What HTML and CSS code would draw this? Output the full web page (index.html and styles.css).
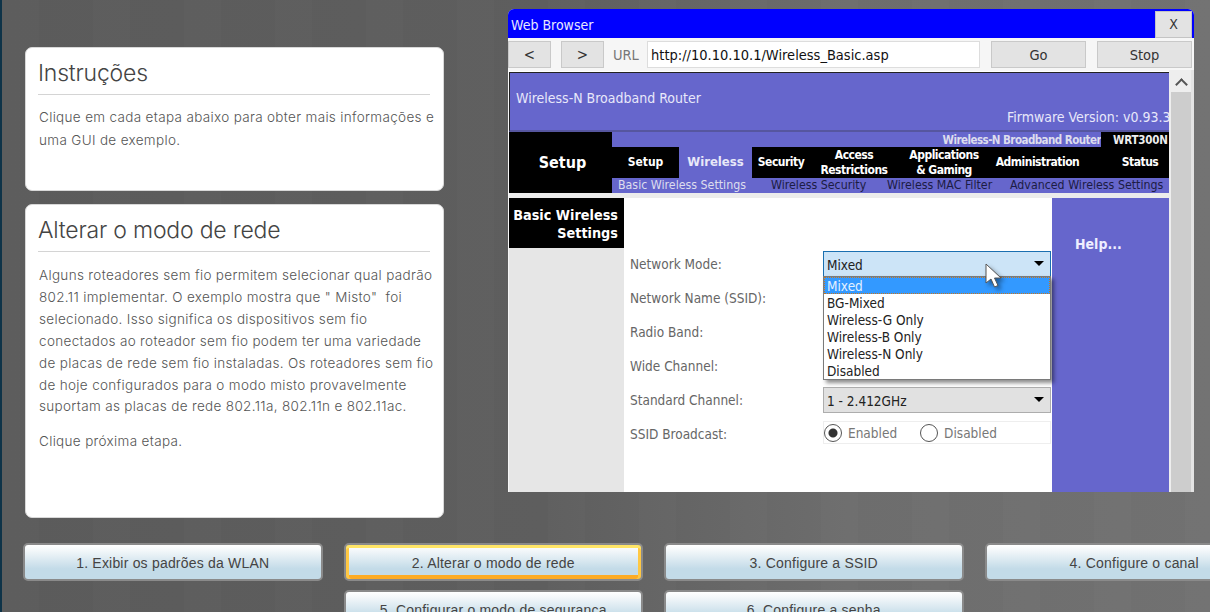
FILE: index.html
```html
<!DOCTYPE html>
<html lang="pt">
<head>
    <meta charset="UTF-8">
    <meta name="viewport" content="width=device-width, initial-scale=1.0">
    <title>Alterar o modo de rede</title>
    <link rel="stylesheet" href="styles.css">
</head>
<body>

<div class="page">
    <div class="top">
        <!-- Text column -->
        <div class="textCol">
            <div class="card cardSmall">
                <h2>Instruções</h2>
                <p>Clique em cada etapa abaixo para obter mais informações e uma GUI de exemplo.</p>
            </div>
            <div class="card cardBig">
                <h2>Alterar o modo de rede</h2>
                <p>Alguns roteadores sem fio permitem selecionar qual padrão 802.11 implementar. O exemplo mostra que " Misto"&nbsp; foi selecionado. Isso significa os dispositivos sem fio conectados ao roteador sem fio podem ter uma variedade de placas de rede sem fio instaladas. Os roteadores sem fio de hoje configurados para o modo misto provavelmente suportam as placas de rede 802.11a, 802.11n e 802.11ac.</p>
                <p class="next">Clique próxima etapa.</p>
            </div>
        </div>

        <!-- Browser window -->
        <div class="browser">
            <div class="titleBar">
                <span>Web Browser</span>
                <div class="closeBtn">X</div>
            </div>
            <div class="urlBar">
                <div class="btn navBtn">&lt;</div>
                <div class="btn navBtn">&gt;</div>
                <span class="urlLabel">URL</span>
                <div class="urlInput">http://10.10.10.1/Wireless_Basic.asp</div>
                <div class="btn goBtn">Go</div>
                <div class="btn goBtn">Stop</div>
            </div>
            <div class="viewport">
                <div class="site">
                    <div class="siteHeader">
                        <div class="siteName">Wireless-N Broadband Router</div>
                        <div class="firmware">Firmware Version: v0.93.3</div>
                    </div>
                    <div class="siteNav">
                        <div class="navTitle">Setup</div>
                        <div class="navRight">
                            <div class="navStrip">
                                <span>Wireless-N Broadband Router</span>
                                <b>WRT300N</b>
                            </div>
                            <div class="navTabs">
                                <div>Setup</div>
                                <div class="activeTab">Wireless</div>
                                <div>Security</div>
                                <div>Access<br>Restrictions</div>
                                <div>Applications<br>&amp; Gaming</div>
                                <div>Administration</div>
                                <div class="statusTab">Status</div>
                            </div>
                            <div class="subTabs">
                                <span class="subActive">Basic Wireless Settings</span>
                                <span class="sub2">Wireless Security</span>
                                <span class="sub3">Wireless MAC Filter</span>
                                <span class="sub4">Advanced Wireless Settings</span>
                            </div>
                        </div>
                    </div>
                    <div class="siteBody">
                        <div class="sideCol">
                            <div class="sideLabel">Basic Wireless<br>Settings</div>
                        </div>
                        <div class="formCol">
                            <div class="formRow">
                                <label>Network Mode:</label>
                                <div class="select selectOpen">Mixed<i class="caret"></i></div>
                            </div>
                            <div class="formRow"><label>Network Name (SSID):</label></div>
                            <div class="formRow"><label>Radio Band:</label></div>
                            <div class="formRow"><label>Wide Channel:</label></div>
                            <div class="formRow">
                                <label>Standard Channel:</label>
                                <div class="select">1 - 2.412GHz<i class="caret"></i></div>
                            </div>
                            <div class="formRow">
                                <label>SSID Broadcast:</label>
                                <div class="radios">
                                    <i class="radio radioOn"></i><span class="radioText">Enabled</span>
                                    <i class="radio"></i><span>Disabled</span>
                                </div>
                            </div>
                            <ul class="dropList">
                                <li class="picked">Mixed</li>
                                <li>BG-Mixed</li>
                                <li>Wireless-G Only</li>
                                <li>Wireless-B Only</li>
                                <li>Wireless-N Only</li>
                                <li>Disabled</li>
                            </ul>
                            <svg class="cursor" width="22" height="28" viewBox="0 0 22 28">
                                <path d="M2 1 L2 20 L7 16 L10.5 24 L14 22.5 L10.5 15 L17 15 Z" fill="#fff" stroke="#555" stroke-width="1"/>
                            </svg>
                        </div>
                        <div class="helpCol">Help...</div>
                    </div>
                </div>
                <div class="scrollBar"><div class="scrollUp"></div></div>
            </div>
        </div>
    </div>

    <!-- Step buttons -->
    <div class="steps">
        <div class="step">1. Exibir os padrões da WLAN</div>
        <div class="step stepActive">2. Alterar o modo de rede</div>
        <div class="step">3. Configure a SSID</div>
        <div class="step">4. Configure o canal</div>
        <div class="step stepSecondRow">5. Configurar o modo de segurança</div>
        <div class="step">6. Configure a senha</div>
    </div>
</div>

</body>
</html>
```

FILE: styles.css
```css
* {
    box-sizing: border-box;
}
html, body {
    margin: 0;
    height: 100%;
    overflow: hidden;
}
.page {
    width: 1210px;
    height: 612px;
    overflow: hidden;
    border-left: 2px solid #0e3348;
    background:
        repeating-linear-gradient(90deg, rgba(255,255,255,0.008) 0, rgba(255,255,255,0.008) 37px, rgba(0,0,0,0.01) 37px, rgba(0,0,0,0.01) 91px),
        linear-gradient(90deg, #5c5c5c 0%, #5f5f5f 45%, #6e6e6e 70%, #727272 100%);
}
.top {
    display: flex;
    align-items: flex-start;
    height: 530px;
}

/* text cards */
.textCol {
    width: 419px;
    margin: 47px 0 0 23px;
}
.card {
    background: #fff;
    border-radius: 7px;
    border: 1px solid #d8d8d8;
    padding: 0 13px 0 12px;
    color: #555;
    font-family: "Inter", sans-serif;
    font-size: 13.5px;
    font-weight: 300;
}
.cardSmall {
    height: 144px;
}
.cardBig {
    height: 314px;
    margin-top: 13px;
}
.card h2 {
    margin: 0;
    height: 47px;
    padding-top: 8px;
    border-bottom: 1px solid #d4d4d4;
    font-size: 23px;
    font-weight: 300;
    line-height: 34px;
    letter-spacing: -0.2px;
    color: #444;
}
.card p {
    margin: 11px -6px 0 1px;
    line-height: 23px;
    letter-spacing: 0.33px;
}
.cardBig p {
    margin-top: 13px;
    line-height: 21.9px;
}
.card .next {
    margin-top: 13px;
}

/* browser window */
.browser {
    width: 686px;
    height: 483px;
    margin: 9px 0 0 64px;
    background: #f6f6f6;
    font-family: "DejaVu Sans Condensed", "DejaVu Sans", sans-serif;
    overflow: hidden;
    border-radius: 6px 6px 0 0;
}
.titleBar {
    height: 29px;
    background: #0000ff;
    color: #e8e8ff;
    font-size: 14px;
    padding: 1px 2px 0 3px;
    display: flex;
    justify-content: space-between;
    align-items: center;
}
.titleBar span {
    padding-top: 2px;
}
.closeBtn {
    width: 37px;
    height: 27px;
    background: #e3e3e3;
    border: 1px solid #c4c4c4;
    color: #333;
    font-size: 14px;
    text-align: center;
    line-height: 25px;
}
.urlBar {
    height: 33px;
    display: flex;
    align-items: flex-start;
    padding-top: 3px;
    font-size: 14.5px;
}
.btn {
    height: 27px;
    background: #e3e3e3;
    border: 1px solid #c9c9c9;
    text-align: center;
    line-height: 26px;
    color: #333;
}
.navBtn {
    width: 43px;
    margin-right: 10px;
    font-size: 15px;
}
.urlLabel {
    width: 34px;
    margin-left: -1px;
    line-height: 28px;
    color: #777;
}
.urlInput {
    width: 333px;
    height: 27px;
    margin-right: 11px;
    padding-left: 3px;
    background: #fff;
    border: 1px solid #ddd;
    line-height: 26px;
    color: #111;
}
.goBtn {
    width: 95px;
    margin-right: 11px;
}
.goBtn:last-child {
    margin-right: 0;
}

.viewport {
    display: flex;
    height: 421px;
}
.site {
    width: 660px;
    margin-left: 1px;
    overflow: hidden;
    background: #fff;
}
.siteHeader {
    height: 60px;
    margin-top: 1px;
    border-top: 1px solid #222;
    border-left: 1px solid #222;
    background: #6666cc;
    color: #e8e8fa;
    font-size: 14px;
    padding: 17px 0 0 6px;
    border-bottom: 2px solid #56569f;
}
.firmware {
    margin: 2px 0 0 491px;
    white-space: nowrap;
    line-height: 18px;
}
.siteNav {
    display: flex;
    height: 61px;
    font-size: 12px;
    font-weight: bold;
    color: #fff;
}
.navTitle {
    width: 103px;
    background: #000;
    font-size: 16px;
    text-align: center;
    line-height: 62px;
    padding-left: 4px;
}
.navRight {
    width: 557px;
}
.navStrip {
    height: 15px;
    background: #6666cc;
    display: flex;
    justify-content: flex-end;
    color: #dde;
    line-height: 16px;
    font-size: 11.5px;
    letter-spacing: -0.55px;
}
.navStrip b {
    width: 68px;
    background: #000;
    color: #eee;
    padding-left: 12px;
    letter-spacing: -0.2px;
}
.navTabs {
    height: 31px;
    background: #000;
    display: grid;
    grid-template-columns: 67px 73px 58px 88px 92px 95px 84px;
    align-items: center;
    text-align: center;
    line-height: 15px;
    font-size: 12px;
    letter-spacing: -0.5px;
}
.navTabs div:first-child {
    letter-spacing: 0;
}
.activeTab {
    background: #6666cc;
    align-self: stretch;
    line-height: 29px;
    font-size: 13px;
    color: #e8e8f8;
    letter-spacing: 0;
}
.statusTab {
    padding-left: 26px;
}
.subTabs {
    height: 15px;
    background: #6666cc;
    font-size: 12.3px;
    font-weight: normal;
    line-height: 15px;
    color: #1c1c44;
    display: flex;
    white-space: nowrap;
    padding-left: 6px;
}
.subActive {
    width: 153px;
    color: #dde;
}
.sub2 {
    width: 116px;
}
.sub3 {
    width: 123px;
}

.siteBody {
    display: flex;
    height: 294px;
    margin-top: 5px;
    box-shadow: 0 -5px 0 #ececec;
}
.sideCol {
    width: 116px;
    margin-left: -1px;
    background: #e6e6e6;
}
.sideLabel {
    height: 50px;
    background: #000;
    color: #fff;
    font-size: 14.3px;
    font-weight: bold;
    text-align: right;
    line-height: 18px;
    padding: 8px 6px 0 0;
}
.formCol {
    position: relative;
    width: 428px;
    padding-top: 53px;
    background: #fff;
    font-size: 13.5px;
}
.formRow {
    display: flex;
    height: 34px;
    align-items: flex-start;
}
.formRow label {
    width: 199px;
    padding: 4px 0 0 6px;
    color: #666;
    line-height: 18px;
}
.select {
    position: relative;
    width: 228px;
    height: 26px;
    background: #e1e1e1;
    border: 1px solid #adadad;
    padding-left: 3px;
    color: #222;
    line-height: 27px;
}
.selectOpen {
    background: #cce4f7;
    border-color: #1a6fb0;
}
.caret {
    position: absolute;
    right: 6px;
    top: 9px;
    border: 5px solid transparent;
    border-top: 5px solid #000;
}
.radios {
    display: flex;
    align-items: center;
    width: 228px;
    height: 23px;
    border: 1px solid #eee;
    color: #777;
    line-height: 24px;
}
.radio {
    width: 18px;
    height: 18px;
    margin-right: 6px;
    border: 1.5px solid #555;
    border-radius: 50%;
    background: #fff;
}
.radioOn {
    background: radial-gradient(circle, #333 0, #333 4px, #fff 5px);
}
.radioText {
    margin-right: 23px;
}
.dropList {
    position: absolute;
    left: 199px;
    top: 78px;
    width: 228px;
    height: 104px;
    margin: 0;
    padding: 0;
    list-style: none;
    background: #fff;
    border: 1px solid #7a7a7a;
    box-shadow: 3px 3px 4px rgba(0, 0, 0, 0.45);
    color: #222;
    line-height: 18px;
}
.dropList li {
    height: 17px;
    padding-left: 3px;
}
.dropList .picked {
    background: #3399ff;
    outline: 1px dotted #c8761e;
    outline-offset: -1px;
    color: #e2f0ff;
}
.cursor {
    position: absolute;
    left: 360px;
    top: 65px;
    filter: drop-shadow(3px 3px 2px rgba(0, 0, 0, 0.4));
}
.helpCol {
    width: 117px;
    background: #6666cc;
    color: #eef;
    font-size: 14px;
    font-weight: bold;
    padding: 38px 0 0 23px;
}
.scrollBar {
    width: 25px;
    margin-top: -1px;
    background: #cdcdcd;
    border-left: 2px solid #eeeeee;
    border-right: 3px solid #e4e4e4;
}
.scrollUp {
    height: 22px;
    background: #eeeeee;
    position: relative;
}
.scrollUp::before {
    content: "";
    position: absolute;
    left: 6px;
    top: 10px;
    width: 7px;
    height: 7px;
    border-left: 2px solid #555;
    border-top: 2px solid #555;
    transform: rotate(45deg);
}

/* step buttons */
.steps {
    display: grid;
    grid-template-columns: repeat(4, 299.5px);
    column-gap: 21px;
    row-gap: 9px;
    margin: 13px 0 0 21px;
}
.step {
    height: 38px;
    border: 2px solid #8a8a8a;
    border-radius: 5px;
    background: linear-gradient(#ffffff 0%, #f4f8fa 15%, #c3dbe8 70%, #c3dbe8 100%);
    color: #444;
    font-family: "Liberation Sans", Arial, sans-serif;
    font-size: 14px;
    text-align: center;
    line-height: 36px;
    letter-spacing: 0.2px;
}
.stepActive {
    box-shadow: inset 0 3px 0 #ffe566, inset 3px 0 0 #ffc843, inset -3px 0 0 #ffc843, inset 0 -4px 0 #fdab24;
}
.stepSecondRow {
    grid-column: 2;
}
```
